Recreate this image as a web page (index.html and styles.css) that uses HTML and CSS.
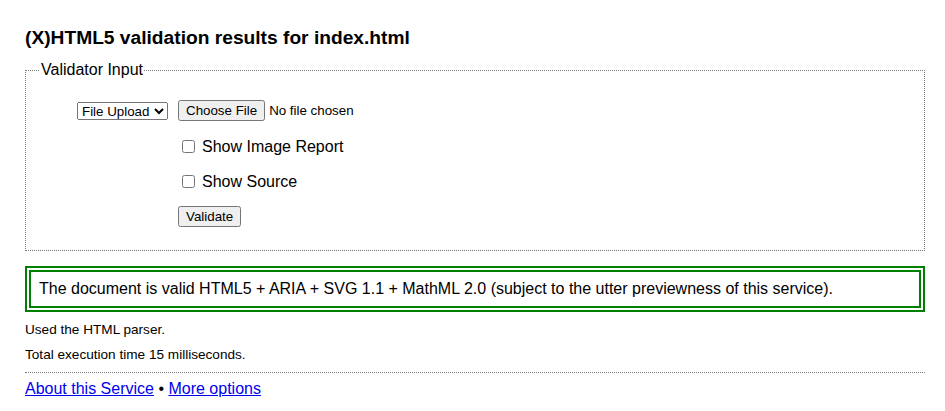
FILE: index.html
```html
<!DOCTYPE html>
<html lang="en">
<head>
<meta charset="utf-8">
<title>(X)HTML5 validation results for index.html</title>
<link rel="stylesheet" href="styles.css">
</head>
<body>
<h1 class="title">(X)HTML5 validation results for index.html</h1>
<form class="form">
  <fieldset class="input-set">
    <legend class="legend">Validator Input</legend>
    <div class="rows">
      <div class="row row-first">
        <div class="cell-head">
          <select class="mode">
            <option>File Upload</option>
            <option>Address</option>
            <option>Text Field</option>
          </select>
        </div>
        <div class="cell-body">
          <input type="file" class="file">
        </div>
      </div>
      <div class="row">
        <div class="cell-head"></div>
        <div class="cell-body">
          <label class="check"><input type="checkbox" class="box"> Show Image Report</label>
        </div>
      </div>
      <div class="row">
        <div class="cell-head"></div>
        <div class="cell-body">
          <label class="check"><input type="checkbox" class="box"> Show Source</label>
        </div>
      </div>
      <div class="row">
        <div class="cell-head"></div>
        <div class="cell-body">
          <input type="submit" class="submit" value="Validate">
        </div>
      </div>
    </div>
  </fieldset>
</form>
<p class="success">The document is valid HTML5 + ARIA + SVG 1.1 + MathML 2.0 (subject to the utter previewness of this service).</p>
<p class="stats">Used the HTML parser.</p>
<p class="stats">Total execution time 15 milliseconds.</p>
<hr class="rule">
<p class="footer"><a href="#about">About this Service</a> • <a href="#options">More options</a></p>
</body>
</html>
```
FILE: styles.css
```css
html, body {
  background: #fff;
}
body {
  margin: 0;
  padding: 20px 20px 0 25px;
  font-family: "Liberation Sans", Arial, sans-serif;
  color: #000;
}
.title {
  font-size: 19.2px;
  font-weight: bold;
  margin: 0 0 5px 0;
  line-height: 36px;
}
.form {
  margin: 0;
}
.input-set {
  margin: 0;
  border: 1px dotted #777;
  padding: 13px 0 16px 0;
}
.legend {
  font-size: 16px;
  padding: 0 1px;
  margin-left: 14px;
}
.rows {
  display: flex;
  flex-direction: column;
}
.row {
  display: grid;
  grid-template-columns: 142px 1fr;
  column-gap: 10px;
  height: 35px;
  align-items: center;
}
.row-first {
  height: 37px;
}
.cell-head {
  display: flex;
  justify-content: flex-end;
}
.cell-body {
  display: flex;
  align-items: center;
}
.mode {
  font-family: "Liberation Sans", Arial, sans-serif;
  font-size: 13.33px;
  margin: 0;
  width: 91px;
  height: 18px;
}
.file {
  font-family: "Liberation Sans", Arial, sans-serif;
  font-size: 13.33px;
  margin: 0;
}
.check {
  font-size: 16px;
  display: flex;
  align-items: center;
}
.box {
  margin: 0 7px 0 4px;
  width: 13px;
  height: 13px;
}
.submit {
  font-family: "Liberation Sans", Arial, sans-serif;
  font-size: 13.33px;
  margin: 0;
}
.success {
  margin: 15px 0 0 0;
  border: 6px double green;
  padding: 8px;
  font-size: 16px;
}
.stats {
  font-size: 13.6px;
  margin: 9px 0 0 0;
  line-height: 17px;
}
.stats + .stats {
  margin-top: 8px;
}
.rule {
  border: 0;
  border-top: 1px dotted #777;
  margin: 9px 0 7px 0;
  height: 0;
}
.footer {
  margin: 0;
  font-size: 16px;
}
.footer a {
  color: #00e;
}
```
